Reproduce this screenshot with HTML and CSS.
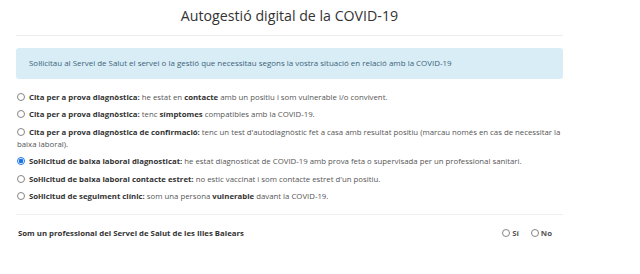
FILE: index.html
```html
<!DOCTYPE html>
<html lang="ca">
<head>
  <meta charset="UTF-8">
  <title>Autogestió digital de la COVID-19</title>
  <link rel="stylesheet" href="styles.css">
</head>
<body>
  <div id="page">
    <h1 class="title">Autogestió digital de la COVID-19</h1>
    <div class="alert">Sol·licitau al Servei de Salut el servei o la gestió que necessitau segons la vostra situació en relació amb la COVID-19</div>

    <form class="options">
      <label class="option"><input type="radio" name="tipus"><b>Cita per a prova diagnòstica:</b> he estat en <b>contacte</b> amb un positiu i som vulnerable i/o convivent.</label>
      <label class="option"><input type="radio" name="tipus"><b>Cita per a prova diagnòstica:</b> tenc <b>símptomes</b> compatibles amb la COVID-19.</label>
      <label class="option"><input type="radio" name="tipus"><b>Cita per a prova diagnòstica de confirmació:</b> tenc un test d'autodiagnòstic fet a casa amb resultat positiu (marcau només en cas de necessitar la baixa laboral).</label>
      <label class="option"><input type="radio" name="tipus" checked><b>Sol·licitud de baixa laboral diagnosticat:</b> he estat diagnosticat de COVID-19 amb prova feta o supervisada per un professional sanitari.</label>
      <label class="option"><input type="radio" name="tipus"><b>Sol·licitud de baixa laboral contacte estret:</b> no estic vaccinat i som contacte estret d'un positiu.</label>
      <label class="option"><input type="radio" name="tipus"><b>Sol·licitud de seguiment clínic:</b> som una persona <b>vulnerable</b> davant la COVID-19.</label>

      <div class="professional">
        <span class="question">Som un professional del Servei de Salut de les Illes Balears</span>
        <div class="answers">
          <label><input type="radio" name="prof"><b>Sí</b></label>
          <label><input type="radio" name="prof"><b>No</b></label>
        </div>
      </div>
    </form>
  </div>
</body>
</html>
```

FILE: styles.css
```css
/* Autogestió page */
body {
  margin: 0;
  background-color: #ffffff;
  font-family: "Open Sans", Arial, sans-serif;
  color: #333;
}

#page {
  width: 547px;
  margin-left: 16px;
}

.title {
  margin: 0;
  padding-top: 6px;
  height: 29px;
  border-bottom: 1px solid #ececec;
  font-size: 14.2px;
  font-weight: normal;
  text-align: center;
  color: #333;
}

.alert {
  margin-top: 12px;
  height: 31px;
  box-sizing: border-box;
  padding: 10px 13px 0;
  background-color: #d9edf7;
  border-radius: 3px;
  font-size: 7.95px;
  color: #3d6478;
}

.options {
  margin-top: 12px;
  font-size: 7.8px;
  color: #555;
}

.option {
  display: block;
  padding-left: 1px;
  margin: 0 -8px 5.4px 0;
  line-height: 12px;
}

.option b {
  color: #333;
}

input[type="radio"] {
  appearance: none;
  display: inline-block;
  vertical-align: -1px;
  width: 8px;
  height: 8px;
  margin: 0 4px 0 0;
  border: 1px solid #858585;
  border-radius: 50%;
  box-sizing: border-box;
  background: #fff;
}

input[type="radio"]:checked {
  border-color: #1a73e8;
  background: radial-gradient(circle, #1a73e8 0 2px, #fff 2.6px);
}

/* margin collapses with the last option's bottom margin */
.professional {
  display: flex;
  justify-content: space-between;
  align-items: center;
  margin-top: 12.5px;
  padding: 13px 11px 0 2px;
  border-top: 1px solid #efefef;
}

.question {
  font-weight: bold;
  color: #333;
}

.answers {
  display: flex;
  gap: 12px;
}

.answers label {
  display: flex;
  align-items: center;
}

.answers input[type="radio"] {
  margin: 0 2px 0 0;
}
```
